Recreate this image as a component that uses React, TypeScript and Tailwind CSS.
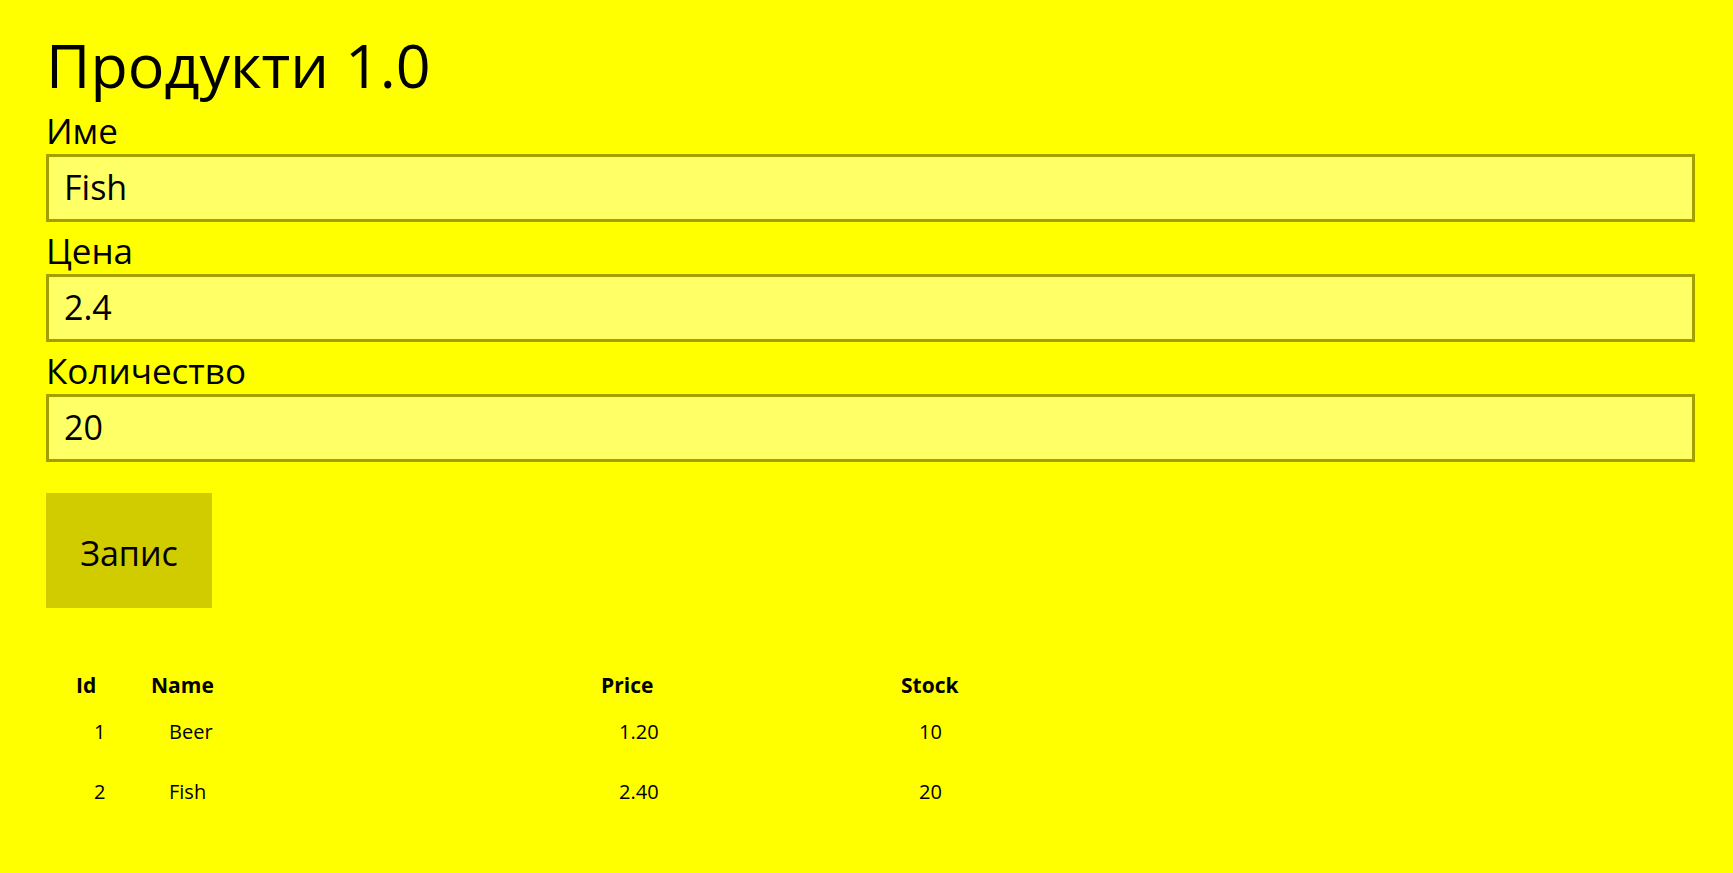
import { useState } from "react";

interface Product {
  id: number;
  name: string;
  price: number;
  stock: number;
}

const products: Product[] = [
  { id: 1, name: "Beer", price: 1.2, stock: 10 },
  { id: 2, name: "Fish", price: 2.4, stock: 20 },
];

export default function App() {
  const [name, setName] = useState("Fish");
  const [price, setPrice] = useState("2.4");
  const [stock, setStock] = useState("20");

  return (
    <div className="min-h-screen bg-[#ffff00] pl-[46px] pr-[38px] font-['Open_Sans',sans-serif] text-black">
      {/* Title */}
      <h1 className="pt-[35px] text-[61px] leading-[60px] font-normal">Продукти 1.0</h1>

      {/* Form */}
      <div className="mt-[7px] flex flex-col">
        <Field label="Име" value={name} onChange={setName} />
        <Field label="Цена" value={price} onChange={setPrice} />
        <Field label="Количество" value={stock} onChange={setStock} />
      </div>

      <button className="mt-[31px] flex h-[115px] w-[166px] items-center justify-center bg-[#d1cc00] pt-[4px] text-[34px] leading-none">
        Запис
      </button>

      {/* Product list */}
      <div className="mt-[67px] ml-[30px]">
        <div className="grid h-[27px] grid-cols-[75px_450px_300px_1fr] text-[21px] leading-[21px] font-bold">
          <div>Id</div>
          <div>Name</div>
          <div>Price</div>
          <div>Stock</div>
        </div>
        {products.map((p) => (
          <div
            key={p.id}
            className="grid h-[60px] grid-cols-[75px_450px_300px_1fr] text-[20px] leading-[60px]"
          >
            <div className="pl-[18px]">{p.id}</div>
            <div className="pl-[18px]">{p.name}</div>
            <div className="pl-[18px]">{p.price.toFixed(2)}</div>
            <div className="pl-[18px]">{p.stock}</div>
          </div>
        ))}
      </div>
    </div>
  );
}

interface FieldProps {
  label: string;
  value: string;
  onChange: (v: string) => void;
}

function Field({ label, value, onChange }: FieldProps) {
  return (
    <>
      <label className="mt-[12px] mb-[6px] h-[34px] text-[35px] leading-[34px]">{label}</label>
      <input
        value={value}
        onChange={(e) => onChange(e.target.value)}
        className="h-[68px] w-full border-[3px] border-[#a3a000] bg-[#ffff66] pb-[3px] pl-[15px] text-[34px] outline-none"
      />
    </>
  );
}
